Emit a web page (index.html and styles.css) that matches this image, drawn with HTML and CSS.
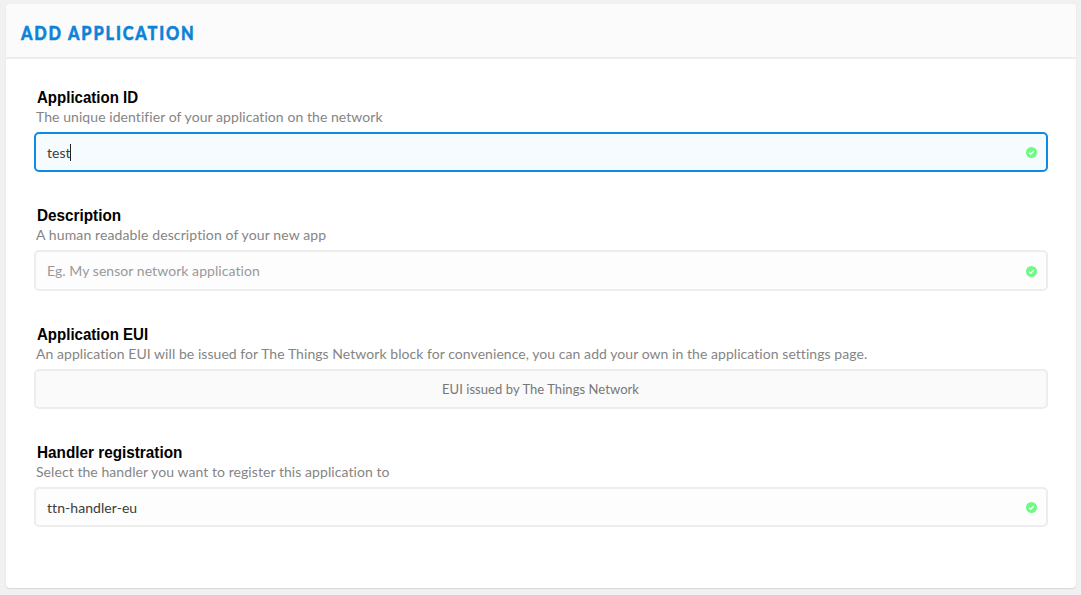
FILE: index.html
```html
<!DOCTYPE html>
<html lang="en">
<head>
<meta charset="utf-8">
<title>Add application</title>
<link rel="stylesheet" href="styles.css">
</head>
<body>
<svg class="defs" width="0" height="0"><symbol id="check" viewBox="0 0 12 12"><circle cx="6.5" cy="6.5" r="5.5" fill="#6cfc80"/><path d="M4.1 6.9 5.7 8.3 8.9 4.9" fill="none" stroke="#fff" stroke-width="1.4"/></symbol></svg>
<main class="card">
  <header class="card-header"><h1 class="title">ADD APPLICATION</h1></header>
  <form class="form">
    <section class="field">
      <h2 class="label label-id">Application ID</h2>
      <p class="help help-id">The unique identifier of your application on the network</p>
      <div class="control focused"><span class="value">test</span><span class="caret"></span><svg class="check"><use href="#check"/></svg></div>
    </section>
    <section class="field">
      <h2 class="label label-desc">Description</h2>
      <p class="help help-desc">A human readable description of your new app</p>
      <div class="control tall"><span class="placeholder">Eg. My sensor network application</span><svg class="check"><use href="#check"/></svg></div>
    </section>
    <section class="field">
      <h2 class="label label-eui">Application EUI</h2>
      <p class="help help-eui">An application EUI will be issued for The Things Network block for convenience, you can add your own in the application settings page.</p>
      <div class="control issued"><span class="issued-text">EUI issued by The Things Network</span></div>
    </section>
    <section class="field">
      <h2 class="label label-handler">Handler registration</h2>
      <p class="help help-handler">Select the handler you want to register this application to</p>
      <div class="control"><span class="value">ttn-handler-eu</span><svg class="check"><use href="#check"/></svg></div>
    </section>
  </form>
</main>
</body>
</html>
```
FILE: styles.css
```css
* { box-sizing: border-box; }
body {
  margin: 0;
  height: 595px;
  padding: 4px 5px 7px 6px;
  background: #f1f1f1;
  font-family: Lato, sans-serif;
  overflow: hidden;
}
.defs { display: block; height: 0; }
.card {
  height: 584px;
  background: #fff;
  border-radius: 4px;
  box-shadow: 0 1px 1px #d8d8d8, 0 0 1px #dedede;
  overflow: hidden;
}
.card-header {
  height: 55px;
  padding: 16px 15px 0;
  background: #fbfbfb;
  border-bottom: 2px solid #ededed;
}
.title {
  margin: 0;
  font-size: 18px;
  line-height: 26px;
  font-weight: 900;
  letter-spacing: 2px;
  color: #0d83d8;
  -webkit-text-stroke: 0.5px #0d83d8;
  transform: scaleX(0.91);
  transform-origin: left;
}
.form {
  display: grid;
  grid-template-rows: 118px 119px 118px 118px;
  padding: 28px 28px 0;
}
.label {
  margin: 0 0 0 3px;
  font: bold 16px/22px "Liberation Sans", Arial, sans-serif;
  color: #000;
  transform: scaleX(0.94);
  transform-origin: left;
}
.label-desc, .label-handler { transform: scaleX(0.956); }
.help {
  margin: -1px 0 1px 2px;
  height: 23px;
  font-size: 14px;
  line-height: 18px;
  letter-spacing: 0.065px;
  color: #858585;
  white-space: nowrap;
}
.help-desc { letter-spacing: 0.12px; }
.help-eui { letter-spacing: 0.055px; }
.control {
  display: flex;
  align-items: center;
  height: 40px;
  padding: 0 9px 0 11px;
  border: 2px solid #ededed;
  border-radius: 5px;
  background: #fdfdfd;
  font-size: 14px;
  line-height: 20px;
  letter-spacing: 0.06px;
  color: #3c3c3c;
}
.tall { height: 41px; }
.focused { background: #f6fbff; border-color: #0d8ae4; }
.issued { justify-content: center; padding: 0 10px 0 9px; background: #fafafa; color: #777; font-size: 13px; }
.value { padding-top: 2px; }
.placeholder { color: #999; }
.caret { width: 1px; height: 17px; margin: 1px 0 0 -1px; background: #222; }
.check { width: 12px; height: 12px; margin-left: auto; }
```
